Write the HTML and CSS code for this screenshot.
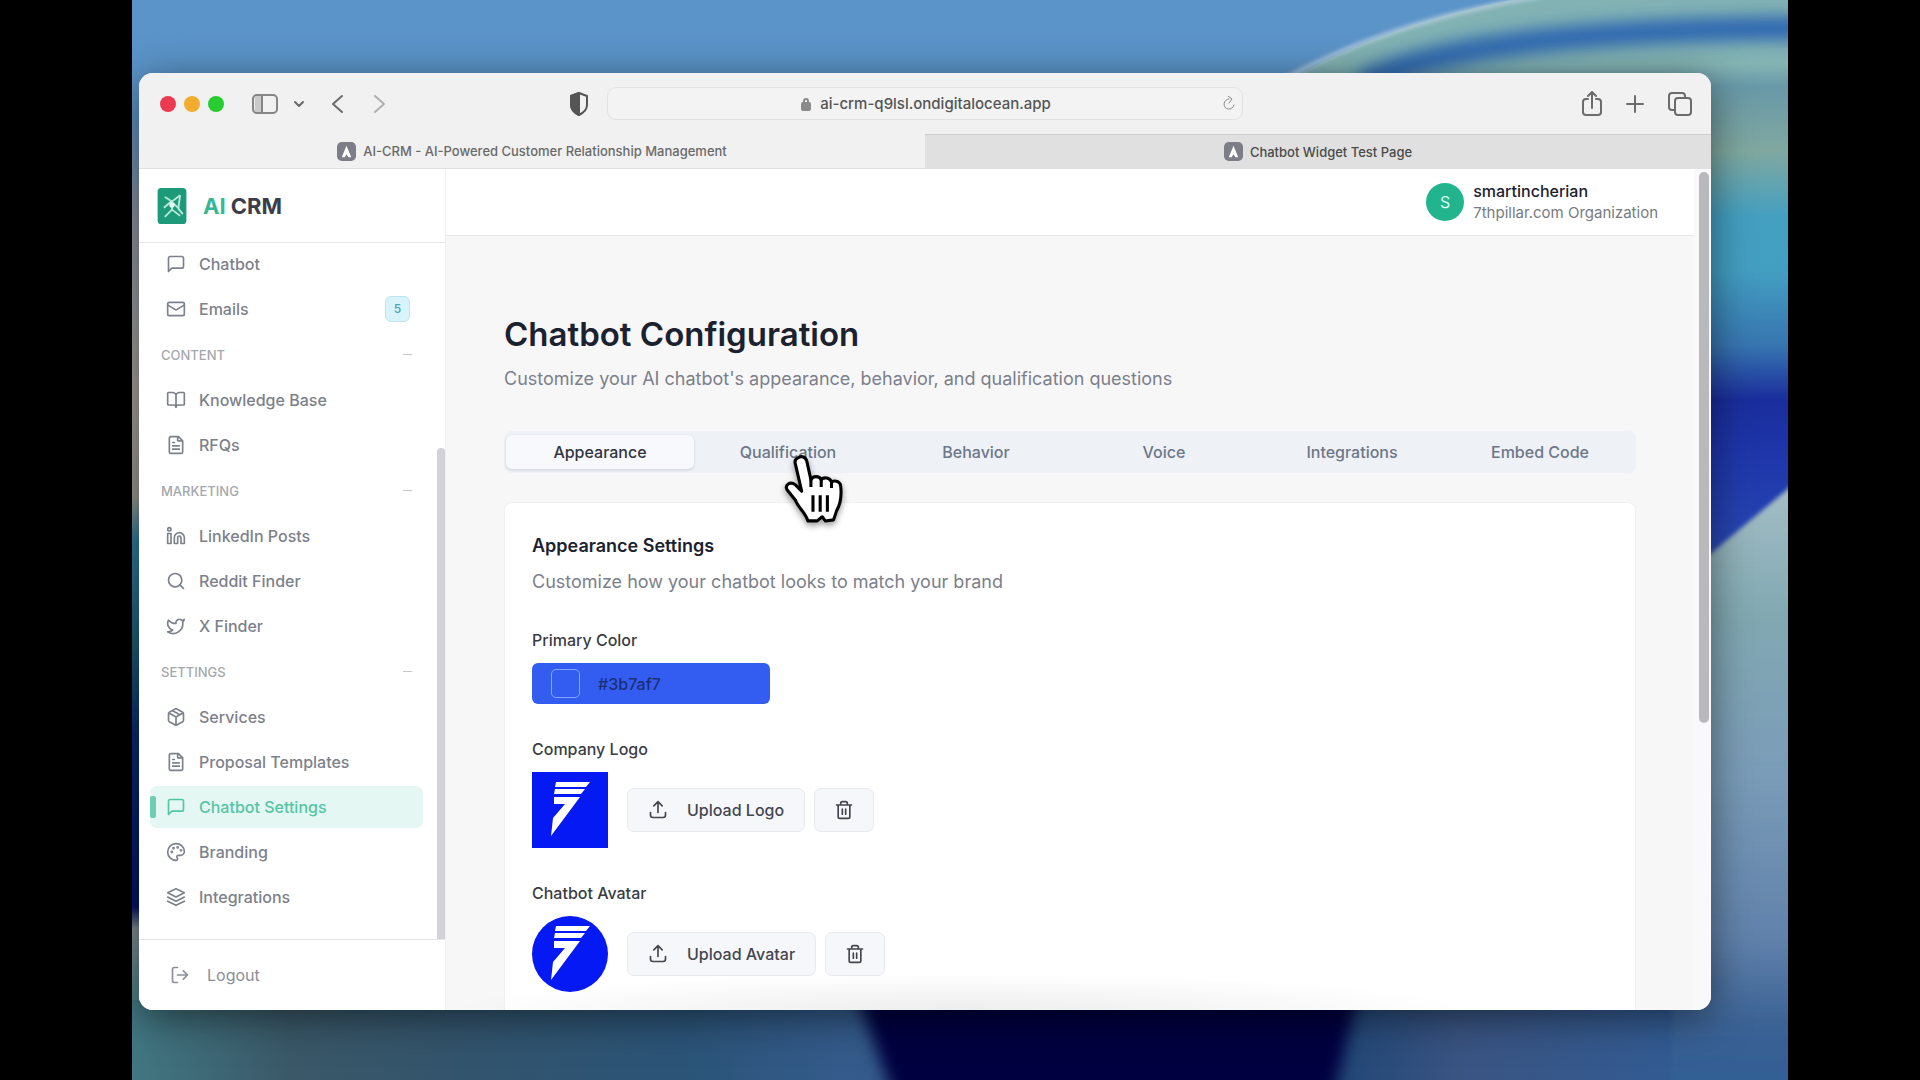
FILE: index.html
```html
<!DOCTYPE html>
<html lang="en">
<head>
    <meta charset="UTF-8">
    <meta name="viewport" content="width=device-width, initial-scale=1.0">
    <title>AI-CRM - AI-Powered Customer Relationship Management</title>
    <link rel="stylesheet" href="styles.css">
</head>
<body>
    <svg class="sprite" aria-hidden="true">
        <symbol id="i-chat" viewBox="0 0 24 24"><path d="M21 15a2 2 0 0 1-2 2H7l-4 4V5a2 2 0 0 1 2-2h14a2 2 0 0 1 2 2z"/></symbol>
        <symbol id="i-mail" viewBox="0 0 24 24"><rect x="2" y="4" width="20" height="16" rx="2"/><path d="m22 7-9 5.700a2 2 0 0 1-2 0L2 7"/></symbol>
        <symbol id="i-book" viewBox="0 0 24 24"><path d="M12 7v14M3 18a1 1 0 0 1-1-1V4a1 1 0 0 1 1-1h5a4 4 0 0 1 4 4 4 4 0 0 1 4-4h5a1 1 0 0 1 1 1v13a1 1 0 0 1-1 1h-6a3 3 0 0 0-3 3 3 3 0 0 0-3-3z"/></symbol>
        <symbol id="i-file" viewBox="0 0 24 24"><path d="M15 2H6a2 2 0 0 0-2 2v16a2 2 0 0 0 2 2h12a2 2 0 0 0 2-2V7zM14 2v5h6M8 9h2M8 13h8M8 17h8"/></symbol>
        <symbol id="i-linkedin" viewBox="0 0 24 24"><path d="M16 8a6 6 0 0 1 6 6v7h-4v-7a2 2 0 0 0-4 0v7h-4v-7a6 6 0 0 1 6-6z"/><rect x="2" y="9" width="4" height="12"/><circle cx="4" cy="4" r="2"/></symbol>
        <symbol id="i-search" viewBox="0 0 24 24"><circle cx="11" cy="11" r="8"/><path d="m21 21-4.300-4.300"/></symbol>
        <symbol id="i-bird" viewBox="0 0 24 24"><path d="M22 4s-.7 2.100-2 3.400c1.600 10-9.400 17.300-18 11.600 2.200.1 4.400-.6 6-2C3 15.500.5 9.600 3 5c2.200 2.600 5.600 4.100 9 4-.9-4.200 4-6.600 7-3.800 1.100 0 3-1.200 3-1.200z"/></symbol>
        <symbol id="i-box" viewBox="0 0 24 24"><path d="M21 8a2 2 0 0 0-1-1.700l-7-4a2 2 0 0 0-2 0l-7 4A2 2 0 0 0 3 8v8a2 2 0 0 0 1 1.700l7 4a2 2 0 0 0 2 0l7-4a2 2 0 0 0 1-1.700zM3.300 7 12 12l8.700-5M12 22V12M7.500 4.300l9 5.100"/></symbol>
        <symbol id="i-palette" viewBox="0 0 24 24"><path d="M12 2a10 10 0 0 0 0 20c1.700 0 2.400-1.500 1.500-2.700-1.200-1.600-.2-3.300 1.500-3.300h2.500A4.500 4.500 0 0 0 22 11.500C22 6 17.500 2 12 2z"/><circle cx="7" cy="12" r=".7"/><circle cx="9" cy="7.500" r=".7"/><circle cx="14" cy="6.500" r=".7"/><circle cx="18" cy="10" r=".7"/></symbol>
        <symbol id="i-layers" viewBox="0 0 24 24"><path d="m12 2 10 5-10 5L2 7zM2 12l10 5 10-5M2 17l10 5 10-5"/></symbol>
        <symbol id="i-logout" viewBox="0 0 24 24"><path d="M9 21H5a2 2 0 0 1-2-2V5a2 2 0 0 1 2-2h4M16 17l5-5-5-5M21 12H9"/></symbol>
        <symbol id="i-upload" viewBox="0 0 24 24"><path d="M21 15v3a3 3 0 0 1-3 3H6a3 3 0 0 1-3-3v-3M17 7l-5-5-5 5M12 2v13"/></symbol>
        <symbol id="i-trash" viewBox="0 0 24 24"><path d="M3 6h18M19 6v14a2 2 0 0 1-2 2H7a2 2 0 0 1-2-2V6M8 6V4a2 2 0 0 1 2-2h4a2 2 0 0 1 2 2v2M10 11v6M14 11v6"/></symbol>
        <symbol id="i-seven" viewBox="0 0 76 76">
            <rect width="76" height="76" fill="#0519f5"/>
            <path fill="#fff" d="M24 10h34l-4 5H23zM23 17h30l-4 5H22zM22 25h26L19 64l2-18 12-14H22z"/>
        </symbol>
        <symbol id="i-site" viewBox="0 0 20 20"><rect width="20" height="20" rx="5" fill="#7d7d88"/><path fill="#fff" d="m10 4 5 12h-3l-2-3-2 3H5z"/></symbol>
    </svg>

    <div class="desktop">
        <svg class="wallpaper" viewBox="0 0 1656 1080" preserveAspectRatio="none" aria-hidden="true">
            <defs>
                <filter id="soft" x="-20%" y="-50%" width="140%" height="200%"><feGaussianBlur stdDeviation="8"/></filter>
                <filter id="edge" x="-5%" y="-5%" width="110%" height="110%"><feGaussianBlur stdDeviation="2"/></filter>
                <linearGradient id="left" x1="0" y1="0" x2="0" y2="1">
                    <stop offset="0" stop-color="#5b98d2"/>
                    <stop offset=".1" stop-color="#5a90c4"/>
                    <stop offset=".2" stop-color="#8c93a2"/>
                    <stop offset=".36" stop-color="#a5a29a"/>
                    <stop offset=".46" stop-color="#9a9a90"/>
                    <stop offset=".5" stop-color="#2f7c9c"/>
                    <stop offset=".6" stop-color="#1d5c74"/>
                    <stop offset=".68" stop-color="#092a72"/>
                    <stop offset=".84" stop-color="#03146a"/>
                    <stop offset=".86" stop-color="#7f9094"/>
                    <stop offset=".94" stop-color="#437c86"/>
                </linearGradient>
                <linearGradient id="right" gradientUnits="userSpaceOnUse" x1="0" y1="0" x2="0" y2="1080">
                    <stop offset="0" stop-color="#82b2b4"/>
                    <stop offset=".06" stop-color="#83b3b3"/>
                    <stop offset=".08" stop-color="#6899a8"/>
                    <stop offset=".14" stop-color="#80a8a0"/>
                    <stop offset=".2" stop-color="#449fc0"/>
                    <stop offset=".25" stop-color="#439fc2"/>
                    <stop offset=".32" stop-color="#3775b0"/>
                    <stop offset=".37" stop-color="#1a2d9c"/>
                    <stop offset=".42" stop-color="#1e36aa"/>
                    <stop offset=".5" stop-color="#2746b2"/>
                </linearGradient>
                <linearGradient id="lower" x1="0" y1="0" x2="0" y2="1">
                    <stop offset="0" stop-color="#adc3cb"/>
                    <stop offset=".25" stop-color="#82a9b2"/>
                    <stop offset=".5" stop-color="#7a9cb8"/>
                    <stop offset=".75" stop-color="#6182ab"/>
                    <stop offset=".88" stop-color="#3c6395"/>
                    <stop offset="1" stop-color="#2f5c94"/>
                </linearGradient>
                <linearGradient id="floor" x1="0" y1="0" x2="1" y2="0">
                    <stop offset="0" stop-color="#417782"/>
                    <stop offset=".1" stop-color="#3a5868"/>
                    <stop offset=".2" stop-color="#33546c"/>
                    <stop offset=".35" stop-color="#2b5478"/>
                    <stop offset=".45" stop-color="#345b8b"/>
                    <stop offset=".76" stop-color="#1f4676"/>
                    <stop offset=".84" stop-color="#3a5482"/>
                    <stop offset="1" stop-color="#315d96"/>
                </linearGradient>
            </defs>
            <rect width="1656" height="1080" fill="url(#left)"/>
            <rect width="1500" height="120" fill="#5b94c9"/>
            <path d="M1140 90Q1250 22 1400-4H1656V600H1140z" fill="url(#right)"/>
            <path d="M1230 84Q1330 28 1700 28" fill="none" stroke="#2d67b0" stroke-width="24" filter="url(#soft)"/>
            <path d="M1140 86Q1250 22 1410-4" fill="none" stroke="#b5cede" stroke-width="4" filter="url(#edge)"/>
            <rect y="1000" width="1580" height="80" fill="url(#floor)"/>
            <path d="M720 980H1230L1195 1120H770z" fill="#020641" filter="url(#soft)"/>
            <path d="M1540 586 1700 452V1100H1540z" fill="url(#lower)" filter="url(#edge)"/>
        </svg>

        <div class="window">
            <header class="toolbar">
                <div class="toolbar-side">
                    <span class="light red"></span>
                    <span class="light amber"></span>
                    <span class="light green"></span>
                    <button class="tool tool-panel" aria-label="Sidebar">
                        <svg width="28" height="22" viewBox="0 0 28 22"><rect x="2" y="2" width="24" height="18" rx="4"/><path d="M11 2v18M5 6h3M5 9h3M5 12h3"/><path class="shade" d="M4 3h6v16H4z"/></svg>
                    </button>
                    <button class="tool tool-more" aria-label="Tab groups">
                        <svg width="12" height="12" viewBox="0 0 12 12"><path d="m2 4 4 4 4-4"/></svg>
                    </button>
                    <button class="tool tool-back" aria-label="Back">
                        <svg width="16" height="22" viewBox="0 0 16 22"><path d="M13 3 4 11l9 8"/></svg>
                    </button>
                    <button class="tool tool-forward" aria-label="Forward">
                        <svg width="16" height="22" viewBox="0 0 16 22"><path d="m3 3 9 8-9 8"/></svg>
                    </button>
                    <button class="tool tool-shield" aria-label="Privacy report">
                        <svg width="20" height="26" viewBox="0 0 20 26"><path d="M10 2 2 5v9c0 5 4 8 8 10 4-2 8-5 8-10V5z"/><path class="solid" d="M10 2 2 5v9c0 5 4 8 8 10z"/></svg>
                    </button>
                </div>
                <div class="address">
                    <svg class="lock" width="10" height="14" viewBox="0 0 10 14"><rect x="1" y="6" width="8" height="7" rx="1"/><path d="M3 6V4a2 2 0 0 1 4 0v2"/></svg>
                    <input class="address-input" type="text" size="22" value="ai-crm-q9lsl.ondigitalocean.app" aria-label="Address">
                    <button class="tool tool-reload" aria-label="Reload">
                        <svg width="14" height="16" viewBox="0 0 14 16"><path d="M7 3a5 5 0 1 0 5 6M6 0l4 3-3 4"/></svg>
                    </button>
                </div>
                <div class="toolbar-side toolbar-end">
                    <button class="tool" aria-label="Share">
                        <svg width="22" height="28" viewBox="0 0 22 28"><path d="M7 9H5a3 3 0 0 0-3 3v10a3 3 0 0 0 3 3h12a3 3 0 0 0 3-3V12a3 3 0 0 0-3-3h-2M11 18V2M7 6l4-4 4 4"/></svg>
                    </button>
                    <button class="tool" aria-label="New tab">
                        <svg width="20" height="20" viewBox="0 0 20 20"><path d="M10 2v16M2 10h16"/></svg>
                    </button>
                    <button class="tool" aria-label="Tab overview">
                        <svg width="26" height="26" viewBox="0 0 26 26"><rect x="8" y="7" width="16" height="17" rx="3"/><path d="M8 19H5a3 3 0 0 1-3-3V5a3 3 0 0 1 3-3h10a3 3 0 0 1 3 3v2"/></svg>
                    </button>
                </div>
            </header>

            <div class="browser-tabs">
                <button class="browser-tab"><svg class="site-icon"><use href="#i-site"/></svg>AI-CRM - AI-Powered Customer Relationship Management</button>
                <button class="browser-tab inactive"><svg class="site-icon"><use href="#i-site"/></svg>Chatbot Widget Test Page</button>
            </div>

            <div class="app">
                <aside class="sidebar">
                    <div class="brand">
                        <svg class="brand-logo" viewBox="0 0 32 40"><rect width="32" height="40" rx="4" fill="#1c9a7a"/><path d="M8 10l8 5 9-7M7 22l8-7 9 8M8 32l8-8 9 7M16 15v9M25 8l-2 15 5 6" fill="none" stroke="#b9eadb" stroke-width="2"/><circle cx="16" cy="19" r="3" fill="#e6faf4"/></svg>
                        <span class="brand-name"><span class="brand-ai">AI</span> CRM</span>
                    </div>
                    <nav class="nav">
                        <a class="nav-item" href="#"><svg class="icon"><use href="#i-chat"/></svg>Chatbot</a>
                        <a class="nav-item" href="#"><svg class="icon"><use href="#i-mail"/></svg>Emails<span class="badge">5</span></a>
                        <button class="nav-heading">CONTENT<span class="dash"></span></button>
                        <a class="nav-item" href="#"><svg class="icon"><use href="#i-book"/></svg>Knowledge Base</a>
                        <a class="nav-item" href="#"><svg class="icon"><use href="#i-file"/></svg>RFQs</a>
                        <button class="nav-heading">MARKETING<span class="dash"></span></button>
                        <a class="nav-item" href="#"><svg class="icon"><use href="#i-linkedin"/></svg>LinkedIn Posts</a>
                        <a class="nav-item" href="#"><svg class="icon"><use href="#i-search"/></svg>Reddit Finder</a>
                        <a class="nav-item" href="#"><svg class="icon"><use href="#i-bird"/></svg>X Finder</a>
                        <button class="nav-heading">SETTINGS<span class="dash"></span></button>
                        <a class="nav-item" href="#"><svg class="icon"><use href="#i-box"/></svg>Services</a>
                        <a class="nav-item" href="#"><svg class="icon"><use href="#i-file"/></svg>Proposal Templates</a>
                        <a class="nav-item active" href="#"><svg class="icon"><use href="#i-chat"/></svg>Chatbot Settings</a>
                        <a class="nav-item" href="#"><svg class="icon"><use href="#i-palette"/></svg>Branding</a>
                        <a class="nav-item" href="#"><svg class="icon"><use href="#i-layers"/></svg>Integrations</a>
                        <span class="nav-thumb"></span>
                    </nav>
                    <div class="sidebar-foot">
                        <a class="logout" href="#"><svg class="icon"><use href="#i-logout"/></svg>Logout</a>
                    </div>
                </aside>

                <div class="page">
                    <div class="topbar">
                        <span class="user-avatar">S</span>
                        <div class="user">
                            <div class="user-name">smartincherian</div>
                            <div class="user-org">7thpillar.com Organization</div>
                        </div>
                    </div>

                    <main class="content">
                        <h1 class="title">Chatbot Configuration</h1>
                        <p class="subtitle">Customize your AI chatbot's appearance, behavior, and qualification questions</p>

                        <div class="tabs" role="tablist">
                            <button class="tab selected" role="tab" aria-selected="true">Appearance</button>
                            <button class="tab" role="tab">Qualification
                                <svg class="pointer" viewBox="0 0 60 68" aria-hidden="true">
                                    <path d="M14 4c4-3 8-1 9 3l4 18c2-4 8-4 10 0 3-3 8-2 10 2 4-2 9 0 9 5 1 10 0 16-4 23l-3 9-8 1-3-4-5 4h-9c-2-8-9-12-12-20L4 35c-3-5 3-9 8-5l6 6-6-26c-1-3 0-5 2-6z" fill="#fff" stroke="#000" stroke-width="3" stroke-linejoin="round"/>
                                    <path d="M27 24v8M37 25v7M47 27v6" fill="none" stroke="#000" stroke-width="3"/>
                                    <path d="M29 40v16M36 40v16M43 40v16" fill="none" stroke="#000" stroke-width="3"/>
                                </svg>
                            </button>
                            <button class="tab" role="tab">Behavior</button>
                            <button class="tab" role="tab">Voice</button>
                            <button class="tab" role="tab">Integrations</button>
                            <button class="tab" role="tab">Embed Code</button>
                        </div>

                        <section class="card">
                            <h2 class="card-title">Appearance Settings</h2>
                            <p class="card-text">Customize how your chatbot looks to match your brand</p>

                            <div class="field">
                                <label class="label" for="color">Primary Color</label>
                                <button class="color" id="color"><span class="swatch"></span>#3b7af7</button>
                            </div>

                            <div class="field">
                                <label class="label" for="logo">Company Logo</label>
                                <div class="upload-row">
                                    <svg class="picture"><use href="#i-seven"/></svg>
                                    <div class="buttons">
                                        <button class="btn" id="logo"><svg class="icon"><use href="#i-upload"/></svg>Upload Logo</button>
                                        <button class="btn btn-icon" aria-label="Remove logo"><svg class="icon"><use href="#i-trash"/></svg></button>
                                    </div>
                                </div>
                            </div>

                            <div class="field">
                                <label class="label" for="avatar">Chatbot Avatar</label>
                                <div class="upload-row">
                                    <svg class="picture round"><use href="#i-seven"/></svg>
                                    <div class="buttons">
                                        <button class="btn" id="avatar"><svg class="icon"><use href="#i-upload"/></svg>Upload Avatar</button>
                                        <button class="btn btn-icon" aria-label="Remove avatar"><svg class="icon"><use href="#i-trash"/></svg></button>
                                    </div>
                                </div>
                            </div>
                        </section>
                    </main>
                </div>
                <div class="gutter"><span class="gutter-thumb"></span></div>
                <div class="bottom-fade"></div>
            </div>
        </div>
    </div>
</body>
</html>
```
FILE: styles.css
```css
* {
    box-sizing: border-box;
}

body {
    margin: 0;
    background: #000;
    font-family: Inter, "Liberation Sans", sans-serif;
    color: #1c2130;
}

button,
input {
    font: inherit;
    color: inherit;
    background: none;
    border: 0;
    padding: 0;
}

a {
    color: inherit;
    text-decoration: none;
}

h1, h2, p {
    margin: 0;
}

.sprite {
    position: absolute;
    width: 0;
    height: 0;
}

.icon {
    width: 20px;
    height: 20px;
    flex: none;
    fill: none;
    stroke: currentColor;
    stroke-width: 2;
    stroke-linecap: round;
    stroke-linejoin: round;
}

/* desktop */

.desktop {
    position: relative;
    display: flex;
    height: 100vh;
    margin: 0 132px;
    padding: 73px 77px 70px 7px;
    overflow: hidden;
}

.wallpaper {
    position: absolute;
    inset: 0;
    width: 100%;
    height: 100%;
}

.window {
    position: relative;
    flex: 1;
    min-width: 0;
    display: flex;
    flex-direction: column;
    overflow: hidden;
    border-radius: 14px;
    background: #f7f7f7;
    box-shadow: 0 8px 40px rgba(0, 0, 0, 0.5);
}

/* browser chrome */

.toolbar {
    display: grid;
    grid-template-columns: minmax(0, 1fr) minmax(300px, 636px) minmax(0, 1fr);
    align-items: center;
    height: 61px;
    flex: none;
    background: #f1f1f1;
}

.toolbar-side {
    display: flex;
    align-items: center;
    padding: 0 18px 0 21px;
}

.light {
    width: 16px;
    height: 16px;
    margin-right: 8px;
    border-radius: 50%;
}

.red {
    background: #ec3a50;
}

.amber {
    background: #f3ad2e;
}

.green {
    background: #26cc30;
}

.tool {
    display: flex;
    color: #6c6c6c;
}

.tool svg,
.lock {
    fill: none;
    stroke: currentColor;
    stroke-width: 2;
    stroke-linecap: round;
    stroke-linejoin: round;
}

.tool .solid {
    fill: currentColor;
}

.tool .shade {
    fill: #c9c9c9;
    stroke: none;
}

.tool-panel {
    margin-left: 19px;
    color: #858585;
}

.tool-more {
    margin-left: 14px;
}

.tool-back {
    margin-left: 24px;
}

.tool-forward {
    margin-left: 27px;
    color: #b0b0b0;
}

.tool-shield {
    margin-left: auto;
    color: #555;
}

.toolbar-end {
    justify-content: flex-end;
    gap: 22px;
}

.address {
    display: flex;
    align-items: center;
    height: 33px;
    padding: 0 6px 0 22px;
    border: 1px solid #e2e2e2;
    border-radius: 9px;
    background: #f3f3f3;
}

.lock {
    margin-left: auto;
    color: #8a8a8a;
}

.lock rect {
    fill: currentColor;
}

.address-input {
    field-sizing: content;
    margin: 0 auto 0 9px;
    font-size: 15px;
    font-weight: 500;
    color: #555;
}

.tool-reload {
    color: #8a8a8a;
}

.tool-reload svg {
    stroke-width: 1;
}

.browser-tabs {
    display: flex;
    height: 35px;
    flex: none;
    background: #f1f1f1;
}

.browser-tab {
    flex: 1;
    display: flex;
    align-items: center;
    justify-content: center;
    gap: 7px;
    font-size: 13px;
    font-weight: 500;
    color: #6a6a6a;
    border-bottom: 1px solid #e0e0e0;
}

.browser-tab.inactive {
    background: #e0e0e0;
    color: #4b4b4b;
    border-top: 1px solid #cdcdcd;
}

.site-icon {
    width: 19px;
    height: 19px;
}

/* sidebar */

.app {
    position: relative;
    flex: 1;
    min-height: 0;
    display: flex;
}

.sidebar {
    width: 307px;
    flex: none;
    display: flex;
    flex-direction: column;
    background: #fff;
    border-right: 1px solid #f0f0f0;
}

.brand {
    display: flex;
    align-items: center;
    gap: 16px;
    height: 74px;
    flex: none;
    padding: 0 18px;
    border-bottom: 1px solid #e8e8e8;
}

.brand-logo {
    width: 30px;
    height: 36px;
}

.brand-name {
    font-size: 22px;
    font-weight: 700;
    color: #3b3d4a;
}

.brand-ai {
    color: #36b898;
}

.nav {
    position: relative;
    flex: 1;
    min-height: 0;
    overflow: hidden;
    padding: 0 22px 0 11px;
}

.nav-item {
    position: relative;
    display: flex;
    align-items: center;
    gap: 13px;
    height: 42px;
    margin-bottom: 3px;
    padding: 0 13px 0 16px;
    border-radius: 7px;
    font-size: 16px;
    font-weight: 500;
    color: #7d818b;
}

.nav-item.active {
    background: #e4f7f2;
    color: #55c5a4;
}

.nav-item.active::before {
    content: "";
    position: absolute;
    left: 0;
    top: 10px;
    width: 6px;
    height: 22px;
    border-radius: 2px;
    background: #6ccfb2;
}

.badge {
    margin-left: auto;
    width: 25px;
    height: 26px;
    border: 1px solid #bfe6f0;
    border-radius: 6px;
    background: #d9f3fa;
    color: #4ba3b5;
    font-size: 12px;
    line-height: 24px;
    text-align: center;
}

.nav-heading {
    display: flex;
    align-items: center;
    justify-content: space-between;
    width: 100%;
    height: 43px;
    margin-bottom: 3px;
    padding: 0 11px;
    font-size: 13px;
    font-weight: 500;
    color: #a5a7ad;
}

.dash {
    width: 9px;
    height: 1px;
    background: #c4c6ca;
}

.nav-thumb {
    position: absolute;
    right: 0;
    top: 205px;
    bottom: 0;
    width: 8px;
    border-radius: 4px 4px 0 0;
    background: #d2d2d8;
}

.sidebar-foot {
    height: 71px;
    flex: none;
    padding: 0 31px;
    border-top: 1px solid #e6e6e6;
}

.logout {
    display: flex;
    align-items: center;
    gap: 17px;
    height: 70px;
    font-size: 16px;
    color: #8b8e97;
}

/* page */

.page {
    flex: 1;
    min-width: 0;
    display: flex;
    flex-direction: column;
    overflow: hidden;
}

.topbar {
    display: flex;
    align-items: center;
    justify-content: flex-end;
    gap: 9px;
    height: 67px;
    flex: none;
    padding: 0 36px 0 58px;
    background: #fff;
    border-bottom: 1px solid #e8e8e8;
}

.user-avatar {
    width: 38px;
    height: 38px;
    border-radius: 50%;
    background: #22b58d;
    color: #d8fff2;
    font-size: 16px;
    line-height: 38px;
    text-align: center;
}

.user-name {
    font-size: 16px;
    font-weight: 500;
    line-height: 21px;
}

.user-org {
    font-size: 15px;
    line-height: 21px;
    color: #777b80;
}

.content {
    padding: 76px 58px 0 58px;
}

.title {
    font-size: 33px;
    font-weight: 600;
    line-height: 44px;
}

.subtitle {
    margin-top: 10px;
    font-size: 18px;
    line-height: 26px;
    color: #7c808b;
}

.tabs {
    display: flex;
    height: 42px;
    margin-top: 39px;
    padding: 4px 2px;
    border-radius: 8px;
    background: #eef1f6;
}

.tab {
    position: relative;
    flex: 1;
    border-radius: 6px;
    font-size: 16px;
    font-weight: 500;
    color: #6d7788;
}

.tab.selected {
    background: #f8f9fc;
    color: #31343f;
    box-shadow: 0 1px 3px rgba(0, 0, 0, 0.14);
}

.pointer {
    position: absolute;
    left: 89px;
    top: 19px;
    width: 62px;
    height: 70px;
    z-index: 2;
    filter: drop-shadow(0 3px 3px rgba(0, 0, 0, 0.4));
}

.card {
    margin-top: 29px;
    padding: 30px 27px 60px;
    border: 1px solid #f0f0f0;
    border-radius: 8px;
    background: #fff;
}

.card-title {
    font-size: 18px;
    font-weight: 600;
    line-height: 26px;
}

.card-text {
    margin-top: 10px;
    font-size: 18px;
    line-height: 26px;
    color: #7c808b;
}

.field {
    display: flex;
    flex-direction: column;
    align-items: flex-start;
    gap: 12px;
    margin-top: 34px;
}

.label {
    font-size: 16px;
    font-weight: 500;
    line-height: 22px;
    color: #3a3c44;
}

.color {
    display: flex;
    align-items: center;
    gap: 18px;
    width: 238px;
    height: 41px;
    padding: 0 19px;
    border-radius: 6px;
    background: #325df0;
    font-size: 16px;
    font-weight: 500;
    color: #1c2f78;
}

.swatch {
    width: 29px;
    height: 29px;
    border: 1px solid #84a8f8;
    border-radius: 5px;
}

.upload-row {
    display: flex;
    align-items: center;
    gap: 19px;
}

.picture {
    width: 76px;
    height: 76px;
}

.picture.round {
    border-radius: 50%;
}

.buttons {
    display: flex;
    gap: 9px;
}

.btn {
    display: flex;
    align-items: center;
    gap: 19px;
    height: 44px;
    padding: 0 20px;
    border: 1px solid #e9eaee;
    border-radius: 7px;
    background: #f6f7fa;
    font-size: 16px;
    font-weight: 500;
    color: #44464f;
}

.btn-icon {
    padding: 0 19px;
}

.gutter {
    width: 17px;
    flex: none;
    display: flex;
    justify-content: flex-end;
    padding: 3px 2px;
    background: #f9f9fb;
}

.gutter-thumb {
    width: 10px;
    height: 66%;
    border-radius: 5px;
    background: #b9b9bb;
}

/* soft shade along the bottom edge of the window */
.bottom-fade {
    position: absolute;
    left: 306px;
    right: 240px;
    bottom: 0;
    height: 36px;
    background: radial-gradient(ellipse 50% 100% at 50% 100%, rgba(0, 0, 0, 0.07), rgba(0, 0, 0, 0));
    pointer-events: none;
}
```
